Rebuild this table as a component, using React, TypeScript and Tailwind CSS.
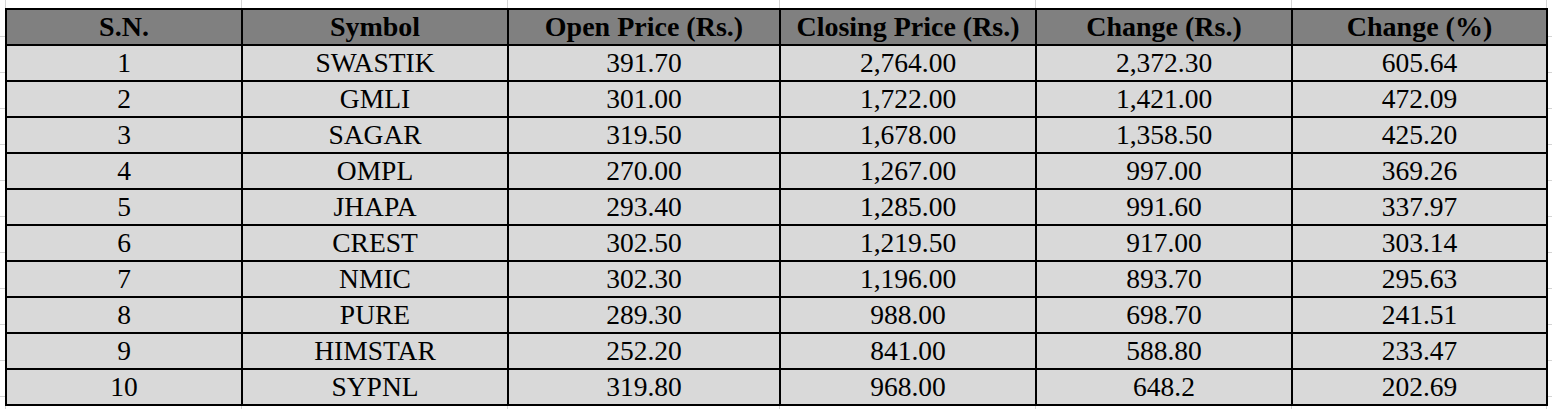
import React from 'react'

const headers = ['S.N.', 'Symbol', 'Open Price (Rs.)', 'Closing Price (Rs.)', 'Change (Rs.)', 'Change (%)']

const rows: string[][] = [
  ['1', 'SWASTIK', '391.70', '2,764.00', '2,372.30', '605.64'],
  ['2', 'GMLI', '301.00', '1,722.00', '1,421.00', '472.09'],
  ['3', 'SAGAR', '319.50', '1,678.00', '1,358.50', '425.20'],
  ['4', 'OMPL', '270.00', '1,267.00', '997.00', '369.26'],
  ['5', 'JHAPA', '293.40', '1,285.00', '991.60', '337.97'],
  ['6', 'CREST', '302.50', '1,219.50', '917.00', '303.14'],
  ['7', 'NMIC', '302.30', '1,196.00', '893.70', '295.63'],
  ['8', 'PURE', '289.30', '988.00', '698.70', '241.51'],
  ['9', 'HIMSTAR', '252.20', '841.00', '588.80', '233.47'],
  ['10', 'SYPNL', '319.80', '968.00', '648.2', '202.69'],
]

// outer sheet gridlines, same widths as the table columns
const colWidths = ['w-[236px]', 'w-[266px]', 'w-[272px]', 'w-[256px]', 'w-[256px]', 'w-[255px]']

const GridStrip = ({ className }: { className: string }) => (
  <div className={`flex ${className}`}>
    {colWidths.map((w, i) => (
      <div key={i} className={`${w} shrink-0 border-l border-[#d4d4d4]`} />
    ))}
    <div className="w-[2px] shrink-0 border-l border-[#d4d4d4]" />
  </div>
)

const SideStrip = () => (
  <div className="flex flex-col pt-[36px]">
    {Array.from({ length: 11 }).map((_, i) => (
      <div key={i} className="h-[36px] shrink-0 border-t border-[#d4d4d4]" />
    ))}
  </div>
)

export default function App() {
  return (
    <div className="w-[1552px] h-[409px] bg-white overflow-hidden grid grid-cols-[5px_1543px_4px] grid-rows-[8px_398px_3px] font-['Liberation_Serif','Times_New_Roman',serif]">
      <div />
      <GridStrip className="h-[8px]" />
      <div />

      <div className="-mt-[8px]">
        <SideStrip />
      </div>
      <div className="grid grid-cols-[234px_264px_270px_254px_254px_253px] auto-rows-[34px] gap-[2px] p-[2px] bg-black text-black leading-none">
        {headers.map((h) => (
          <div key={h} className="bg-[#808080] font-bold text-[28px] flex items-center justify-center">
            {h}
          </div>
        ))}
        {rows.map((r) =>
          r.map((c, j) => (
            <div key={r[0] + '-' + j} className="bg-[#d9d9d9] text-[27.5px] flex items-center justify-center">
              {c}
            </div>
          ))
        )}
      </div>
      <div className="-mt-[8px]">
        <SideStrip />
      </div>

      <div />
      <GridStrip className="h-[3px]" />
      <div />
    </div>
  )
}
